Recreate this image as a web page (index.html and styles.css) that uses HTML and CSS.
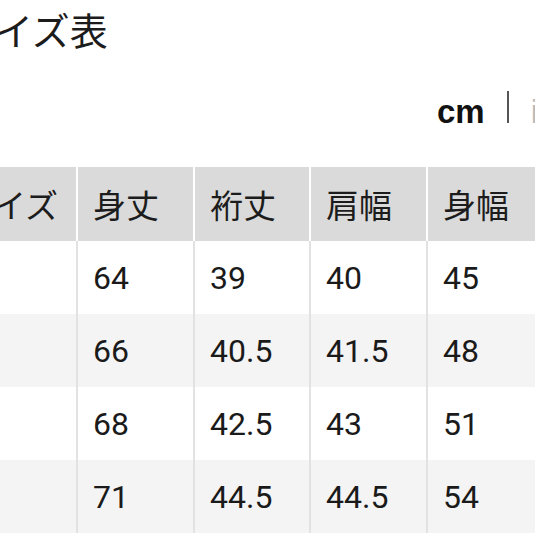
FILE: index.html
```html
<!DOCTYPE html>
<html lang="ja">
<head>
<meta charset="utf-8">
<title>サイズ表</title>
<link rel="stylesheet" href="styles.css">
</head>
<body>
<div class="page">
  <h1 class="title">サイズ表</h1>
  <div class="units">
    <span class="unit active">cm</span>
    <span class="sep"></span>
    <span class="unit">inch</span>
  </div>
  <table class="size-table">
    <thead>
      <tr><th class="c1">サイズ</th><th class="c2">身丈</th><th class="c3">裄丈</th><th class="c4">肩幅</th><th class="c5">身幅</th></tr>
    </thead>
    <tbody>
      <tr><td class="c1">XS</td><td class="c2">64</td><td class="c3">39</td><td class="c4">40</td><td class="c5">45</td></tr>
      <tr><td class="c1">S</td><td class="c2">66</td><td class="c3">40.5</td><td class="c4">41.5</td><td class="c5">48</td></tr>
      <tr><td class="c1">M</td><td class="c2">68</td><td class="c3">42.5</td><td class="c4">43</td><td class="c5">51</td></tr>
      <tr><td class="c1">L</td><td class="c2">71</td><td class="c3">44.5</td><td class="c4">44.5</td><td class="c5">54</td></tr>
    </tbody>
  </table>
</div>
</body>
</html>
```

FILE: styles.css
```css
html, body {
  margin: 0;
  padding: 0;
  overflow: hidden;
  background: #fff;
}
body {
  font-family: "Noto Sans CJK JP", "Noto Sans", sans-serif;
  color: #1c1c1c;
}
.page {
  width: 740px;
  margin-left: -55px;
}
.title {
  margin: 0;
  padding-left: 12px;
  font-size: 38px;
  font-weight: 400;
  line-height: 57px;
}
.units {
  display: flex;
  align-items: center;
  gap: 22px;
  height: 66px;
  margin-top: 17px;
  padding-left: 492px;
}
.unit {
  font-family: "Liberation Sans", Arial, sans-serif;
  font-size: 33px;
  line-height: 40px;
  padding-top: 10px;
  color: #bbb;
}
.unit.active {
  font-weight: 700;
  color: #111;
}
.sep {
  width: 2px;
  height: 32px;
  background: #555;
}
.size-table {
  margin-top: 27px;
  border-collapse: separate;
  border-spacing: 0;
}
.size-table th,
.size-table td {
  box-sizing: content-box;
  padding: 0 0 0 15px;
  text-align: left;
  font-weight: 400;
  white-space: nowrap;
}
.size-table .c1 { width: 116px; }
.size-table .c2 { width: 100px; }
.size-table .c3 { width: 99px; }
.size-table .c4 { width: 100px; }
.size-table .c5 { width: 160px; }
.size-table th {
  height: 74px;
  font-size: 33px;
  background: #dadada;
  border-left: 2px solid #fff;
}
.size-table td {
  height: 73px;
  font-family: Roboto, "Noto Sans", sans-serif;
  font-size: 32px;
  color: #1a1a1a;
  border-left: 2px solid #e2e2e2;
}
.size-table th:first-child,
.size-table td:first-child {
  border-left: none;
}
.size-table tbody tr:nth-child(even) td {
  background: #f4f4f4;
}
```
